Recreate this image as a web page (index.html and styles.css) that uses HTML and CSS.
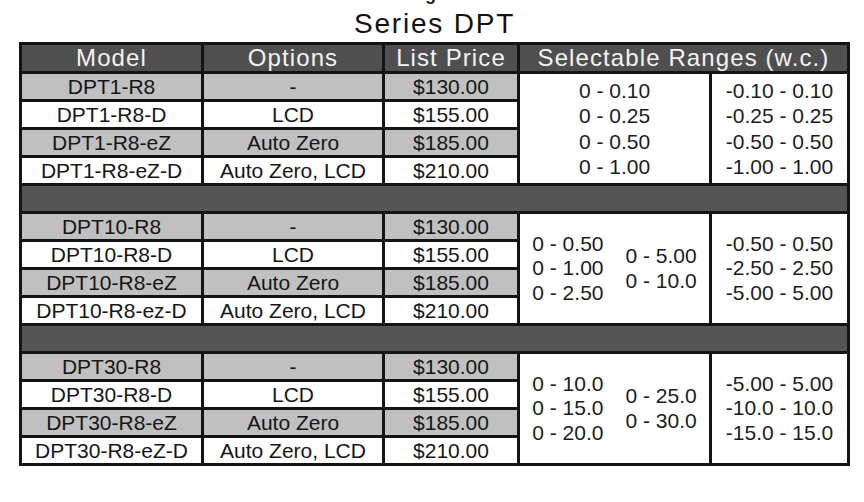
FILE: index.html
```html
<!DOCTYPE html>
<html lang="en">
<head>
<meta charset="utf-8">
<title>Series DPT</title>
<link rel="stylesheet" href="styles.css">
</head>
<body>
<div class="sheet">
  <div class="clip"><span class="clip-text">Pricing Effective</span></div>
  <h1 class="title">Series DPT</h1>
  <div class="grid">
    <div class="hd">Model</div>
    <div class="hd">Options</div>
    <div class="hd">List Price</div>
    <div class="hd span2">Selectable Ranges (w.c.)</div>

    <div class="c g">DPT1-R8</div>
    <div class="c g">-</div>
    <div class="c g">$130.00</div>
    <div class="rng r1 lh1"><div class="col"><span>0 - 0.10</span><span>0 - 0.25</span><span>0 - 0.50</span><span>0 - 1.00</span></div></div>
    <div class="rng r1 lh1"><div class="col"><span>-0.10 - 0.10</span><span>-0.25 - 0.25</span><span>-0.50 - 0.50</span><span>-1.00 - 1.00</span></div></div>
    <div class="c">DPT1-R8-D</div>
    <div class="c">LCD</div>
    <div class="c">$155.00</div>
    <div class="c g">DPT1-R8-eZ</div>
    <div class="c g">Auto Zero</div>
    <div class="c g">$185.00</div>
    <div class="c">DPT1-R8-eZ-D</div>
    <div class="c">Auto Zero, LCD</div>
    <div class="c">$210.00</div>

    <div class="sep"></div>

    <div class="c g">DPT10-R8</div>
    <div class="c g">-</div>
    <div class="c g">$130.00</div>
    <div class="rng r1 lh2 split"><div class="col"><span>0 - 0.50</span><span>0 - 1.00</span><span>0 - 2.50</span></div><div class="col"><span>0 - 5.00</span><span>0 - 10.0</span></div></div>
    <div class="rng r1 lh2"><div class="col"><span>-0.50 - 0.50</span><span>-2.50 - 2.50</span><span>-5.00 - 5.00</span></div></div>
    <div class="c">DPT10-R8-D</div>
    <div class="c">LCD</div>
    <div class="c">$155.00</div>
    <div class="c g">DPT10-R8-eZ</div>
    <div class="c g">Auto Zero</div>
    <div class="c g">$185.00</div>
    <div class="c">DPT10-R8-ez-D</div>
    <div class="c">Auto Zero, LCD</div>
    <div class="c">$210.00</div>

    <div class="sep"></div>

    <div class="c g">DPT30-R8</div>
    <div class="c g">-</div>
    <div class="c g">$130.00</div>
    <div class="rng r1 lh2 split"><div class="col"><span>0 - 10.0</span><span>0 - 15.0</span><span>0 - 20.0</span></div><div class="col"><span>0 - 25.0</span><span>0 - 30.0</span></div></div>
    <div class="rng r1 lh2"><div class="col"><span>-5.00 - 5.00</span><span>-10.0 - 10.0</span><span>-15.0 - 15.0</span></div></div>
    <div class="c">DPT30-R8-D</div>
    <div class="c">LCD</div>
    <div class="c">$155.00</div>
    <div class="c g">DPT30-R8-eZ</div>
    <div class="c g">Auto Zero</div>
    <div class="c g">$185.00</div>
    <div class="c">DPT30-R8-eZ-D</div>
    <div class="c">Auto Zero, LCD</div>
    <div class="c">$210.00</div>
  </div>
</div>
</body>
</html>
```

FILE: styles.css
```css
html, body {
  margin: 0;
  padding: 0;
  background: #ffffff;
}
body {
  font-family: "Liberation Sans", Arial, sans-serif;
  color: #161616;
}
.sheet {
  margin-left: 19px;
  width: 831px;
}
.clip {
  height: 4px;
  overflow: hidden;
  padding-left: 350px;
}
.clip-text {
  display: block;
  margin-top: -16px;
  font-size: 18px;
  line-height: 20px;
  font-weight: bold;
  color: #222;
  letter-spacing: 1px;
}
.title {
  margin: 4px 0 2px 0;
  height: 32px;
  line-height: 32px;
  font-size: 28px;
  font-weight: normal;
  letter-spacing: 1.8px;
  text-align: center;
  color: #121212;
}
.grid {
  display: grid;
  grid-template-columns: 179px 178px 132px 189px 1fr;
  grid-template-rows: 26px repeat(14, 25px);
  gap: 3px;
  padding: 3px;
  background: #141414;
}
.hd {
  background: #4f4f4f;
  color: #f3f3f3;
  font-size: 24px;
  letter-spacing: 1.1px;
  display: flex;
  align-items: center;
  justify-content: center;
  white-space: nowrap;
}
.span2 {
  grid-column: span 2;
}
.c {
  background: #ffffff;
  font-size: 21px;
  display: flex;
  align-items: center;
  justify-content: center;
  white-space: nowrap;
  color: #161616;
}
.c.g {
  background: #c0c0c0;
}
.sep {
  grid-column: 1 / -1;
  background: #555555;
}
.rng {
  background: #ffffff;
  font-size: 21px;
  display: flex;
  align-items: center;
  justify-content: center;
  color: #1c1c1c;
  white-space: nowrap;
}
.r1 {
  grid-row: span 4;
}
.col {
  display: flex;
  flex-direction: column;
  align-items: center;
}
.lh1 .col {
  line-height: 25.5px;
}
.lh2 .col {
  line-height: 24.5px;
}
.split {
  gap: 22px;
}
.split .col {
  align-items: flex-start;
}
```
